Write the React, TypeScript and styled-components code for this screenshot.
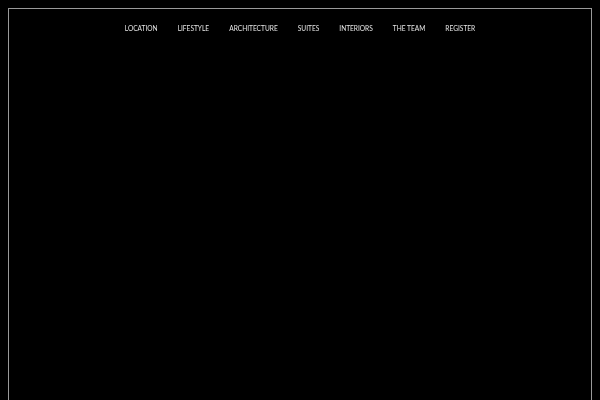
import styled, { createGlobalStyle } from 'styled-components';

const GlobalStyle = createGlobalStyle`
    html, body {
        background: #000;
    }
    body {
        margin: 8px;
        font-family: Lato, "Noto Sans", sans-serif;
        -webkit-font-smoothing: antialiased;
    }
`;

const Frame = styled.div`
    border: 1px solid #9a9a9a;
    min-height: 420px;
    box-sizing: border-box;
`;

const Nav = styled.nav`
    display: flex;
    justify-content: center;
    gap: 20px;
    padding-top: 14px;
    will-change: transform;
`;

const NavItem = styled.a`
    color: #e6e6e6;
    font-size: 6.6px;
    line-height: 10px;
    text-transform: uppercase;
    text-decoration: none;
    cursor: pointer;
`;

const items = ['Location', 'Lifestyle', 'Architecture', 'Suites', 'Interiors', 'The Team', 'Register'];

export default function App() {
    return <>
        <GlobalStyle />
        <Frame>
            <Nav>
                {items.map(item => <NavItem key={item}>{item}</NavItem>)}
            </Nav>
        </Frame>
    </>;
}
